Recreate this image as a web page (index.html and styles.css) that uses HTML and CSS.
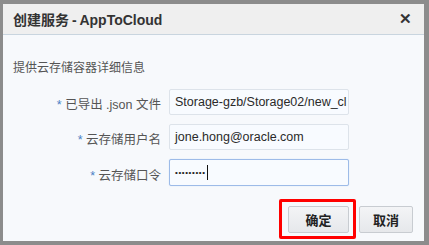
FILE: index.html
```html
<!DOCTYPE html>
<html lang="zh-CN">
<head>
    <meta charset="UTF-8">
    <title>创建服务 - AppToCloud</title>
    <link rel="stylesheet" href="styles.css">
</head>
<body>
    <div class="dialog">
        <div class="dialog-header">
            <span class="dialog-title">创建服务 - AppToCloud</span>
            <span class="dialog-close">✕</span>
        </div>
        <div class="dialog-body">
            <p class="intro">提供云存储容器详细信息</p>
            <div class="form">
                <label class="field-label"><span class="req">*</span> 已导出 .json 文件</label>
                <div class="field-input">Storage-gzb/Storage02/new_cl</div>

                <label class="field-label"><span class="req">*</span> 云存储用户名</label>
                <div class="field-input">jone.hong@oracle.com</div>

                <label class="field-label"><span class="req">*</span> 云存储口令</label>
                <div class="field-input focused"><span class="dots">•••••••••</span><span class="caret"></span></div>
            </div>
            <div class="actions">
                <button class="btn highlight">确定</button>
                <button class="btn">取消</button>
            </div>
        </div>
    </div>
</body>
</html>
```

FILE: styles.css
```css
body {
    margin: 0;
    width: 429px;
    height: 245px;
    overflow: hidden;
    background: #8c8c8c;
    font-family: "Liberation Sans", "Noto Sans CJK SC", sans-serif;
    color: #333;
}

.dialog {
    margin: 4px 5px 0 3px;
    height: 237px;
    background: #f7f9fc;
    display: flex;
    flex-direction: column;
}

.dialog-header {
    height: 30px;
    background: #efefef;
    border-bottom: 1px solid #c9d5df;
    display: flex;
    align-items: center;
    justify-content: space-between;
    padding: 0 12px 0 10px;
}

.dialog-title {
    font-size: 14px;
    font-weight: bold;
    color: #333;
    word-spacing: -1px;
}

.dialog-close {
    font-size: 15px;
    font-weight: bold;
    color: #333;
}

.dialog-body {
    flex: 1;
    display: flex;
    flex-direction: column;
}

.intro {
    margin: 24px 0 0 10px;
    font-size: 12px;
    color: #555;
    line-height: 18px;
}

.form {
    margin-top: 12px;
    display: grid;
    grid-template-columns: 158px 180px;
    column-gap: 8px;
    row-gap: 9px;
    align-items: center;
}

.field-label {
    text-align: right;
    font-size: 12.5px;
    color: #555;
    padding-top: 3px;
}

.req {
    color: #4a7fc4;
}

.field-input {
    height: 26px;
    box-sizing: border-box;
    border: 1px solid #dde3ea;
    border-radius: 2px;
    background: #f8fbff;
    padding: 0 5px;
    font-size: 12.5px;
    color: #2a2a2a;
    white-space: nowrap;
    overflow: hidden;
    display: flex;
    align-items: center;
}

.field-input.focused {
    height: 27px;
    border: 1px solid #9dbbe8;
    box-shadow: 0 0 1px #b7cff2;
}

.dots {
    font-size: 8px;
    letter-spacing: 0.6px;
    color: #222;
}

.caret {
    width: 1px;
    height: 15px;
    background: #111;
    margin-left: 1px;
}

.actions {
    margin-top: 20px;
    display: flex;
    justify-content: flex-end;
    gap: 10px;
    padding-right: 11px;
}

.btn {
    height: 27px;
    padding: 0;
    width: 61px;
    border: 1px solid #c8ccd1;
    border-radius: 2px;
    background: linear-gradient(#f3f4f6, #e6e8eb);
    font-family: "Liberation Sans", "Noto Sans CJK SC", sans-serif;
    font-size: 13px;
    font-weight: bold;
    color: #222;
}

.btn + .btn {
    width: 54px;
}

.highlight {
    position: relative;
}

.highlight::after {
    content: "";
    position: absolute;
    top: -8px;
    bottom: -7px;
    left: -10px;
    right: -8px;
    border: 3px solid #f00;
    border-radius: 2px;
}
```
